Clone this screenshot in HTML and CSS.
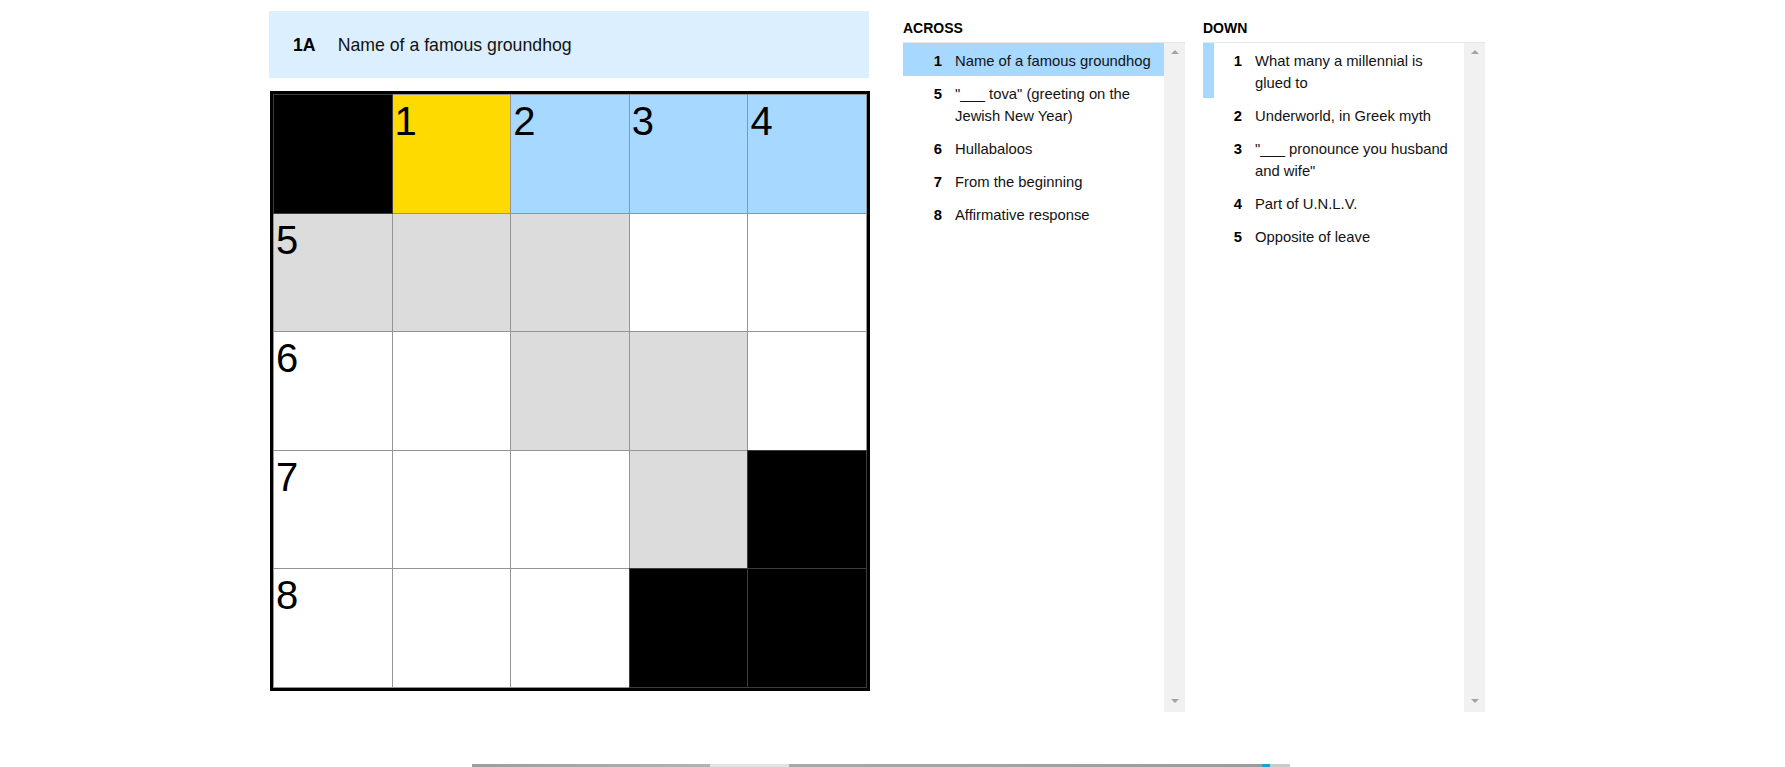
FILE: index.html
```html
<!DOCTYPE html>
<html lang="en">
<head>
<meta charset="utf-8">
<title>The Mini Crossword</title>
<link rel="stylesheet" href="styles.css">
</head>
<body>
<div class="page">
  <div class="app">
    <section class="board">
      <div class="banner">
        <span class="banner-num">1A</span>
        <span class="banner-text">Name of a famous groundhog</span>
      </div>
      <div class="grid">
        <div class="cell black"></div>
        <div class="cell yellow"><span class="label">1</span></div>
        <div class="cell blue"><span class="label">2</span></div>
        <div class="cell blue"><span class="label">3</span></div>
        <div class="cell blue"><span class="label">4</span></div>

        <div class="cell gray"><span class="label">5</span></div>
        <div class="cell gray"></div>
        <div class="cell gray"></div>
        <div class="cell"></div>
        <div class="cell"></div>

        <div class="cell"><span class="label">6</span></div>
        <div class="cell"></div>
        <div class="cell gray"></div>
        <div class="cell gray"></div>
        <div class="cell"></div>

        <div class="cell"><span class="label">7</span></div>
        <div class="cell"></div>
        <div class="cell"></div>
        <div class="cell gray"></div>
        <div class="cell black"></div>

        <div class="cell"><span class="label">8</span></div>
        <div class="cell"></div>
        <div class="cell"></div>
        <div class="cell black"></div>
        <div class="cell black"></div>
      </div>
    </section>

    <section class="clues">
      <h3 class="clues-title">ACROSS</h3>
      <div class="clues-box">
        <ol class="clue-list">
          <li class="clue active"><span class="num">1</span><span class="text">Name of a famous groundhog</span></li>
          <li class="clue"><span class="num">5</span><span class="text">"___ tova" (greeting on the Jewish New Year)</span></li>
          <li class="clue"><span class="num">6</span><span class="text">Hullabaloos</span></li>
          <li class="clue"><span class="num">7</span><span class="text">From the beginning</span></li>
          <li class="clue"><span class="num">8</span><span class="text">Affirmative response</span></li>
        </ol>
        <div class="scrollbar"><span class="arrow up"></span><span class="arrow down"></span></div>
      </div>
    </section>

    <section class="clues">
      <h3 class="clues-title">DOWN</h3>
      <div class="clues-box">
        <ol class="clue-list">
          <li class="clue related"><span class="num">1</span><span class="text">What many a millennial is glued to</span></li>
          <li class="clue"><span class="num">2</span><span class="text">Underworld, in Greek myth</span></li>
          <li class="clue"><span class="num">3</span><span class="text">"___ pronounce you husband and wife"</span></li>
          <li class="clue"><span class="num">4</span><span class="text">Part of U.N.L.V.</span></li>
          <li class="clue"><span class="num">5</span><span class="text">Opposite of leave</span></li>
        </ol>
        <div class="scrollbar"><span class="arrow up"></span><span class="arrow down"></span></div>
      </div>
    </section>
  </div>

  <div class="strip">
    <span class="seg seg-a"></span>
    <span class="seg seg-b"></span>
    <span class="seg seg-c"></span>
    <span class="seg seg-d"></span>
    <span class="seg seg-e"></span>
  </div>
</div>
</body>
</html>
```

FILE: styles.css
```css
html, body {
  margin: 0;
  padding: 0;
  overflow: hidden;
  background: #ffffff;
}

body {
  font-family: "Liberation Sans", Arial, sans-serif;
  color: #121212;
}

.page {
  width: 1785px;
  height: 767px;
}

.app {
  display: flex;
  align-items: flex-start;
  padding: 11px 0 0 269px;
}

/* ---------- board ---------- */

.board {
  width: 601px;
  display: flex;
  flex-direction: column;
}

.banner {
  width: 600px;
  height: 67px;
  box-sizing: border-box;
  background: #dcefff;
  display: flex;
  align-items: center;
  padding: 2px 0 0 24px;
  font-size: 17.7px;
  color: #121212;
}

.banner-num {
  font-weight: bold;
  color: #000;
  margin-right: 22px;
}

.grid {
  margin: 13px 0 0 1px;
  width: 600px;
  height: 600px;
  box-sizing: border-box;
  border: 3px solid #000;
  padding: 1px;
  background: #959595;
  display: grid;
  grid-template-columns: repeat(5, 1fr);
  grid-template-rows: repeat(5, 1fr);
  gap: 1px;
}

.cell {
  position: relative;
  background: #ffffff;
}

.cell.black {
  background: #000;
  box-shadow: 0 0 0 1px #3c3c3c;
}

.cell.yellow { background: #ffda00; }
.cell.blue { background: #a7d8ff; }
.cell.gray { background: #dcdcdc; }

.label {
  position: absolute;
  left: 2px;
  top: 6px;
  font-family: "Liberation Sans", Arial, sans-serif;
  font-size: 40px;
  line-height: 1;
  color: #000;
}

/* ---------- clue lists ---------- */

.clues {
  width: 282px;
  display: flex;
  flex-direction: column;
  margin-left: 33px;
}

.clues + .clues {
  margin-left: 18px;
}

.clues-title {
  margin: 7px 0 4px;
  font-size: 14px;
  line-height: 20px;
  font-weight: bold;
  color: #000;
}

.clues-box {
  height: 670px;
  box-sizing: border-box;
  border-top: 1px solid #e6e6e6;
  display: flex;
}

.clue-list {
  flex: 1;
  margin: 0;
  padding: 0;
  list-style: none;
}

.clue {
  display: flex;
  align-items: flex-start;
  padding: 7px 0 4px;
  font-size: 14.8px;
  line-height: 22px;
}

.clue.active {
  background: #a7d8ff;
}

.clue.related {
  box-shadow: inset 11px 0 0 #a7d8ff;
}

.num {
  flex: none;
  width: 39px;
  text-align: right;
  font-weight: bold;
  color: #000;
}

.text {
  flex: 1;
  margin-left: 13px;
  padding-right: 4px;
}

.scrollbar {
  flex: none;
  width: 21px;
  background: #f1f1f1;
  display: flex;
  flex-direction: column;
  justify-content: space-between;
  align-items: center;
  padding: 7px 0 9px;
  box-sizing: border-box;
}

.arrow {
  width: 0;
  height: 0;
  border-left: 4.5px solid transparent;
  border-right: 4.5px solid transparent;
}

.arrow.up {
  border-bottom: 4px solid #a3a3a3;
}

.arrow.down {
  border-top: 4px solid #a3a3a3;
}

/* ---------- bottom strip ---------- */

.strip {
  margin: 52px 0 0 472px;
  width: 818px;
  height: 12px;
  display: flex;
}

.seg { display: block; height: 100%; }
.seg-a { width: 238px; background: linear-gradient(90deg, #9d9d9d, #b3b3b3); }
.seg-b { width: 79px; background: #e3e3e3; }
.seg-c { width: 473px; background: linear-gradient(90deg, #a9a9a9, #9b9b9b); }
.seg-d { width: 8px; background: #1a9fdc; }
.seg-e { width: 20px; background: #cacaca; }
```
